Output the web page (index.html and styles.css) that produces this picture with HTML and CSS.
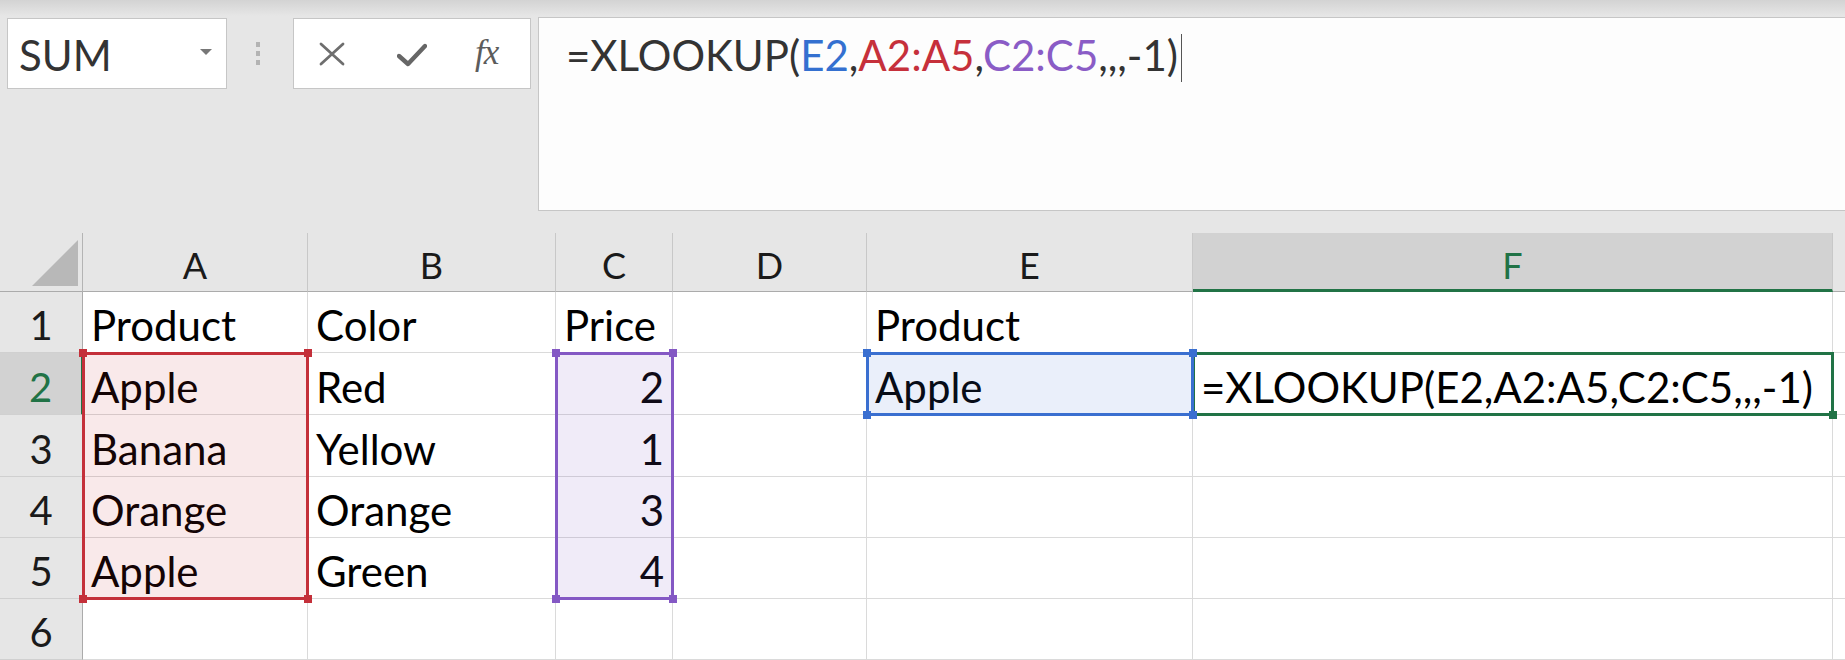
FILE: index.html
```html
<!DOCTYPE html>
<html>
<head>
<meta charset="utf-8">
<title>XLOOKUP</title>
<link rel="stylesheet" href="styles.css">
</head>
<body>
<div class="toolbar">
  <div class="namebox"><span class="nb-text">SUM</span><span class="nb-arrow"></span></div>
  <div class="grip"><i></i><i></i><i></i></div>
  <div class="iconbox">
    <svg class="ic-x" width="28" height="24" viewBox="0 0 28 24"><path d="M3 2 L25 22 M25 2 L3 22" stroke="#6e6e6e" stroke-width="2.8" fill="none" stroke-linecap="round"/></svg>
    <svg class="ic-check" width="30" height="24" viewBox="0 0 30 24"><path d="M2 13 L11 21 L28 3" stroke="#666" stroke-width="4.4" fill="none" stroke-linecap="round" stroke-linejoin="round"/></svg>
    <span class="fx">fx</span>
  </div>
  <div class="formula"><span class="f-text">=XLOOKUP(<span class="r-blue">E2</span>,<span class="r-red">A2:A5</span>,<span class="r-purple">C2:C5</span>,,,-1)</span><span class="caret"></span></div>
</div>

<div class="sheet-wrap">
  <div class="sheet">
    <div class="corner"><svg width="83" height="58" viewBox="0 0 83 58"><polygon points="32,53 78,7 78,53" fill="#b8b8b8"/></svg></div>
    <div class="ch">A</div>
    <div class="ch">B</div>
    <div class="ch">C</div>
    <div class="ch">D</div>
    <div class="ch">E</div>
    <div class="ch sel">F</div>
    <div class="ch"></div>

    <div class="rh">1</div>
    <div class="c">Product</div>
    <div class="c">Color</div>
    <div class="c">Price</div>
    <div class="c"></div>
    <div class="c">Product</div>
    <div class="c"></div>
    <div class="c"></div>

    <div class="rh sel">2</div>
    <div class="c">Apple</div>
    <div class="c">Red</div>
    <div class="c num">2</div>
    <div class="c"></div>
    <div class="c">Apple</div>
    <div class="c">=XLOOKUP(E2,A2:A5,C2:C5,,,-1)</div>
    <div class="c"></div>

    <div class="rh">3</div>
    <div class="c">Banana</div>
    <div class="c">Yellow</div>
    <div class="c num">1</div>
    <div class="c"></div>
    <div class="c"></div>
    <div class="c"></div>
    <div class="c"></div>

    <div class="rh">4</div>
    <div class="c">Orange</div>
    <div class="c">Orange</div>
    <div class="c num">3</div>
    <div class="c"></div>
    <div class="c"></div>
    <div class="c"></div>
    <div class="c"></div>

    <div class="rh">5</div>
    <div class="c">Apple</div>
    <div class="c">Green</div>
    <div class="c num">4</div>
    <div class="c"></div>
    <div class="c"></div>
    <div class="c"></div>
    <div class="c"></div>

    <div class="rh">6</div>
    <div class="c"></div>
    <div class="c"></div>
    <div class="c"></div>
    <div class="c"></div>
    <div class="c"></div>
    <div class="c"></div>
    <div class="c"></div>
  </div>

  <div class="marks">
    <div class="mark m-red"><i class="h tl"></i><i class="h tr"></i><i class="h bl"></i><i class="h br"></i></div>
    <div class="mark m-purple"><i class="h tl"></i><i class="h tr"></i><i class="h bl"></i><i class="h br"></i></div>
    <div class="mark m-green"><i class="h br"></i></div>
    <div class="mark m-blue"><i class="h tl"></i><i class="h tr"></i><i class="h bl"></i><i class="h br"></i></div>
  </div>
</div>
</body>
</html>
```

FILE: styles.css
```css
* { box-sizing: border-box; }

body {
  margin: 0;
  width: 1845px;
  height: 660px;
  overflow: hidden;
  background: #e6e6e6;
  font-family: Lato, "Open Sans", sans-serif;
}

/* ---------- formula bar ---------- */
.toolbar {
  height: 233px;
  display: flex;
  align-items: flex-start;
  padding: 18px 0 0 7px;
  background: linear-gradient(#d3d3d3 0, #e6e6e6 16px);
}

.namebox {
  width: 220px;
  height: 71px;
  background: #fff;
  border: 1px solid #c6c6c6;
  display: flex;
  align-items: flex-start;
  justify-content: space-between;
  padding: 15px 14px 0 11px;
}

.nb-text {
  font-size: 42px;
  line-height: 42px;
  color: #333;
}

.nb-arrow {
  margin-top: 15px;
  width: 0;
  height: 0;
  border-left: 6px solid transparent;
  border-right: 6px solid transparent;
  border-top: 6px solid #777;
}

.grip {
  width: 66px;
  height: 71px;
  display: flex;
  flex-direction: column;
  align-items: center;
  justify-content: center;
  gap: 4px;
  padding-right: 4px;
}

.grip i {
  display: block;
  width: 4px;
  height: 5px;
  background: #b3b3b3;
}

.iconbox {
  width: 238px;
  height: 71px;
  background: #fff;
  border: 1px solid #c6c6c6;
  display: flex;
  align-items: center;
  padding-left: 24px;
}

.ic-x { margin-top: 1px; }
.ic-check { margin-left: 51px; margin-top: 3px; }

.fx {
  margin-left: 48px;
  font-family: "Liberation Serif", "DejaVu Serif", serif;
  font-style: italic;
  font-size: 35px;
  line-height: 35px;
  color: #5c5c5c;
  margin-top: -2px;
  letter-spacing: -1px;
}

.formula {
  flex: 1;
  height: 194px;
  margin: -1px -2px 0 7px;
  background: #fdfdfd;
  border: 1px solid #c6c6c6;
  padding: 16px 0 0 27px;
  font-size: 42px;
  line-height: 42px;
  color: #333;
  white-space: nowrap;
}

.r-blue { color: #3470d0; }
.r-red { color: #c6303b; }
.r-purple { color: #8a5cc6; }

.caret {
  display: inline-block;
  width: 1px;
  height: 48px;
  margin-left: 3px;
  vertical-align: -11px;
  background: #555;
}

/* ---------- sheet ---------- */
.sheet-wrap {
  display: grid;
}

.sheet,
.marks {
  grid-area: 1 / 1;
  display: grid;
  grid-template-columns: 83px 225px 248px 117px 194px 326px 640px 1fr;
  grid-template-rows: 59px 61px 62px 62px 61px 61px 61px;
}

.marks { z-index: 1; }

.corner {
  background: #e6e6e6;
  border-right: 1px solid #b4b4b4;
  border-bottom: 1px solid #ababab;
}

.corner svg { display: block; }

.ch {
  background: #e6e6e6;
  border-right: 1px solid #c8c8c8;
  border-bottom: 1px solid #ababab;
  display: flex;
  justify-content: center;
  align-items: flex-end;
  padding-bottom: 8px;
  font-size: 36px;
  line-height: 36px;
  color: #1a1a1a;
}

.ch.sel {
  background: #d2d2d2;
  color: #217346;
  border-bottom: 3px solid #217346;
  padding-bottom: 6px;
}

.rh {
  background: #e6e6e6;
  border-right: 1px solid #ababab;
  border-bottom: 1px solid #d0d0d0;
  display: flex;
  justify-content: center;
  align-items: flex-end;
  padding-bottom: 7px;
  font-size: 40px;
  line-height: 40px;
  color: #1a1a1a;
}

.rh.sel {
  background: #d2d2d2;
  color: #217346;
  border-right: 2px solid #217346;
}

.c {
  background: #fff;
  border-right: 1px solid #dadada;
  border-bottom: 1px solid #dadada;
  display: flex;
  align-items: flex-end;
  padding: 0 8px 6px 8px;
  font-size: 42px;
  line-height: 42px;
  color: #000;
  white-space: nowrap;
}

.c.num { justify-content: flex-end; }

/* ---------- range highlights ---------- */
.mark {
  position: relative;
  margin: -1px;
  border: 3px solid;
}

.m-red { grid-area: 3 / 2 / 7 / 3; border-color: #c4303a; background: rgba(200, 40, 50, 0.1); }
.m-purple { grid-area: 3 / 4 / 7 / 5; border-color: #8458c4; background: rgba(128, 90, 200, 0.12); }
.m-blue { grid-area: 3 / 6 / 4 / 7; border-color: #3a6fd0; background: rgba(60, 110, 210, 0.11); }
.m-green { grid-area: 3 / 7 / 4 / 8; border-color: #217346; }

.h {
  position: absolute;
  width: 8px;
  height: 8px;
}

.m-red .h { background: #c4303a; }
.m-purple .h { background: #8458c4; }
.m-blue .h { background: #3a6fd0; }
.m-green .h { background: #217346; }

.h.tl { top: -6px; left: -6px; }
.h.tr { top: -6px; right: -6px; }
.h.bl { bottom: -6px; left: -6px; }
.h.br { bottom: -6px; right: -6px; }
```
